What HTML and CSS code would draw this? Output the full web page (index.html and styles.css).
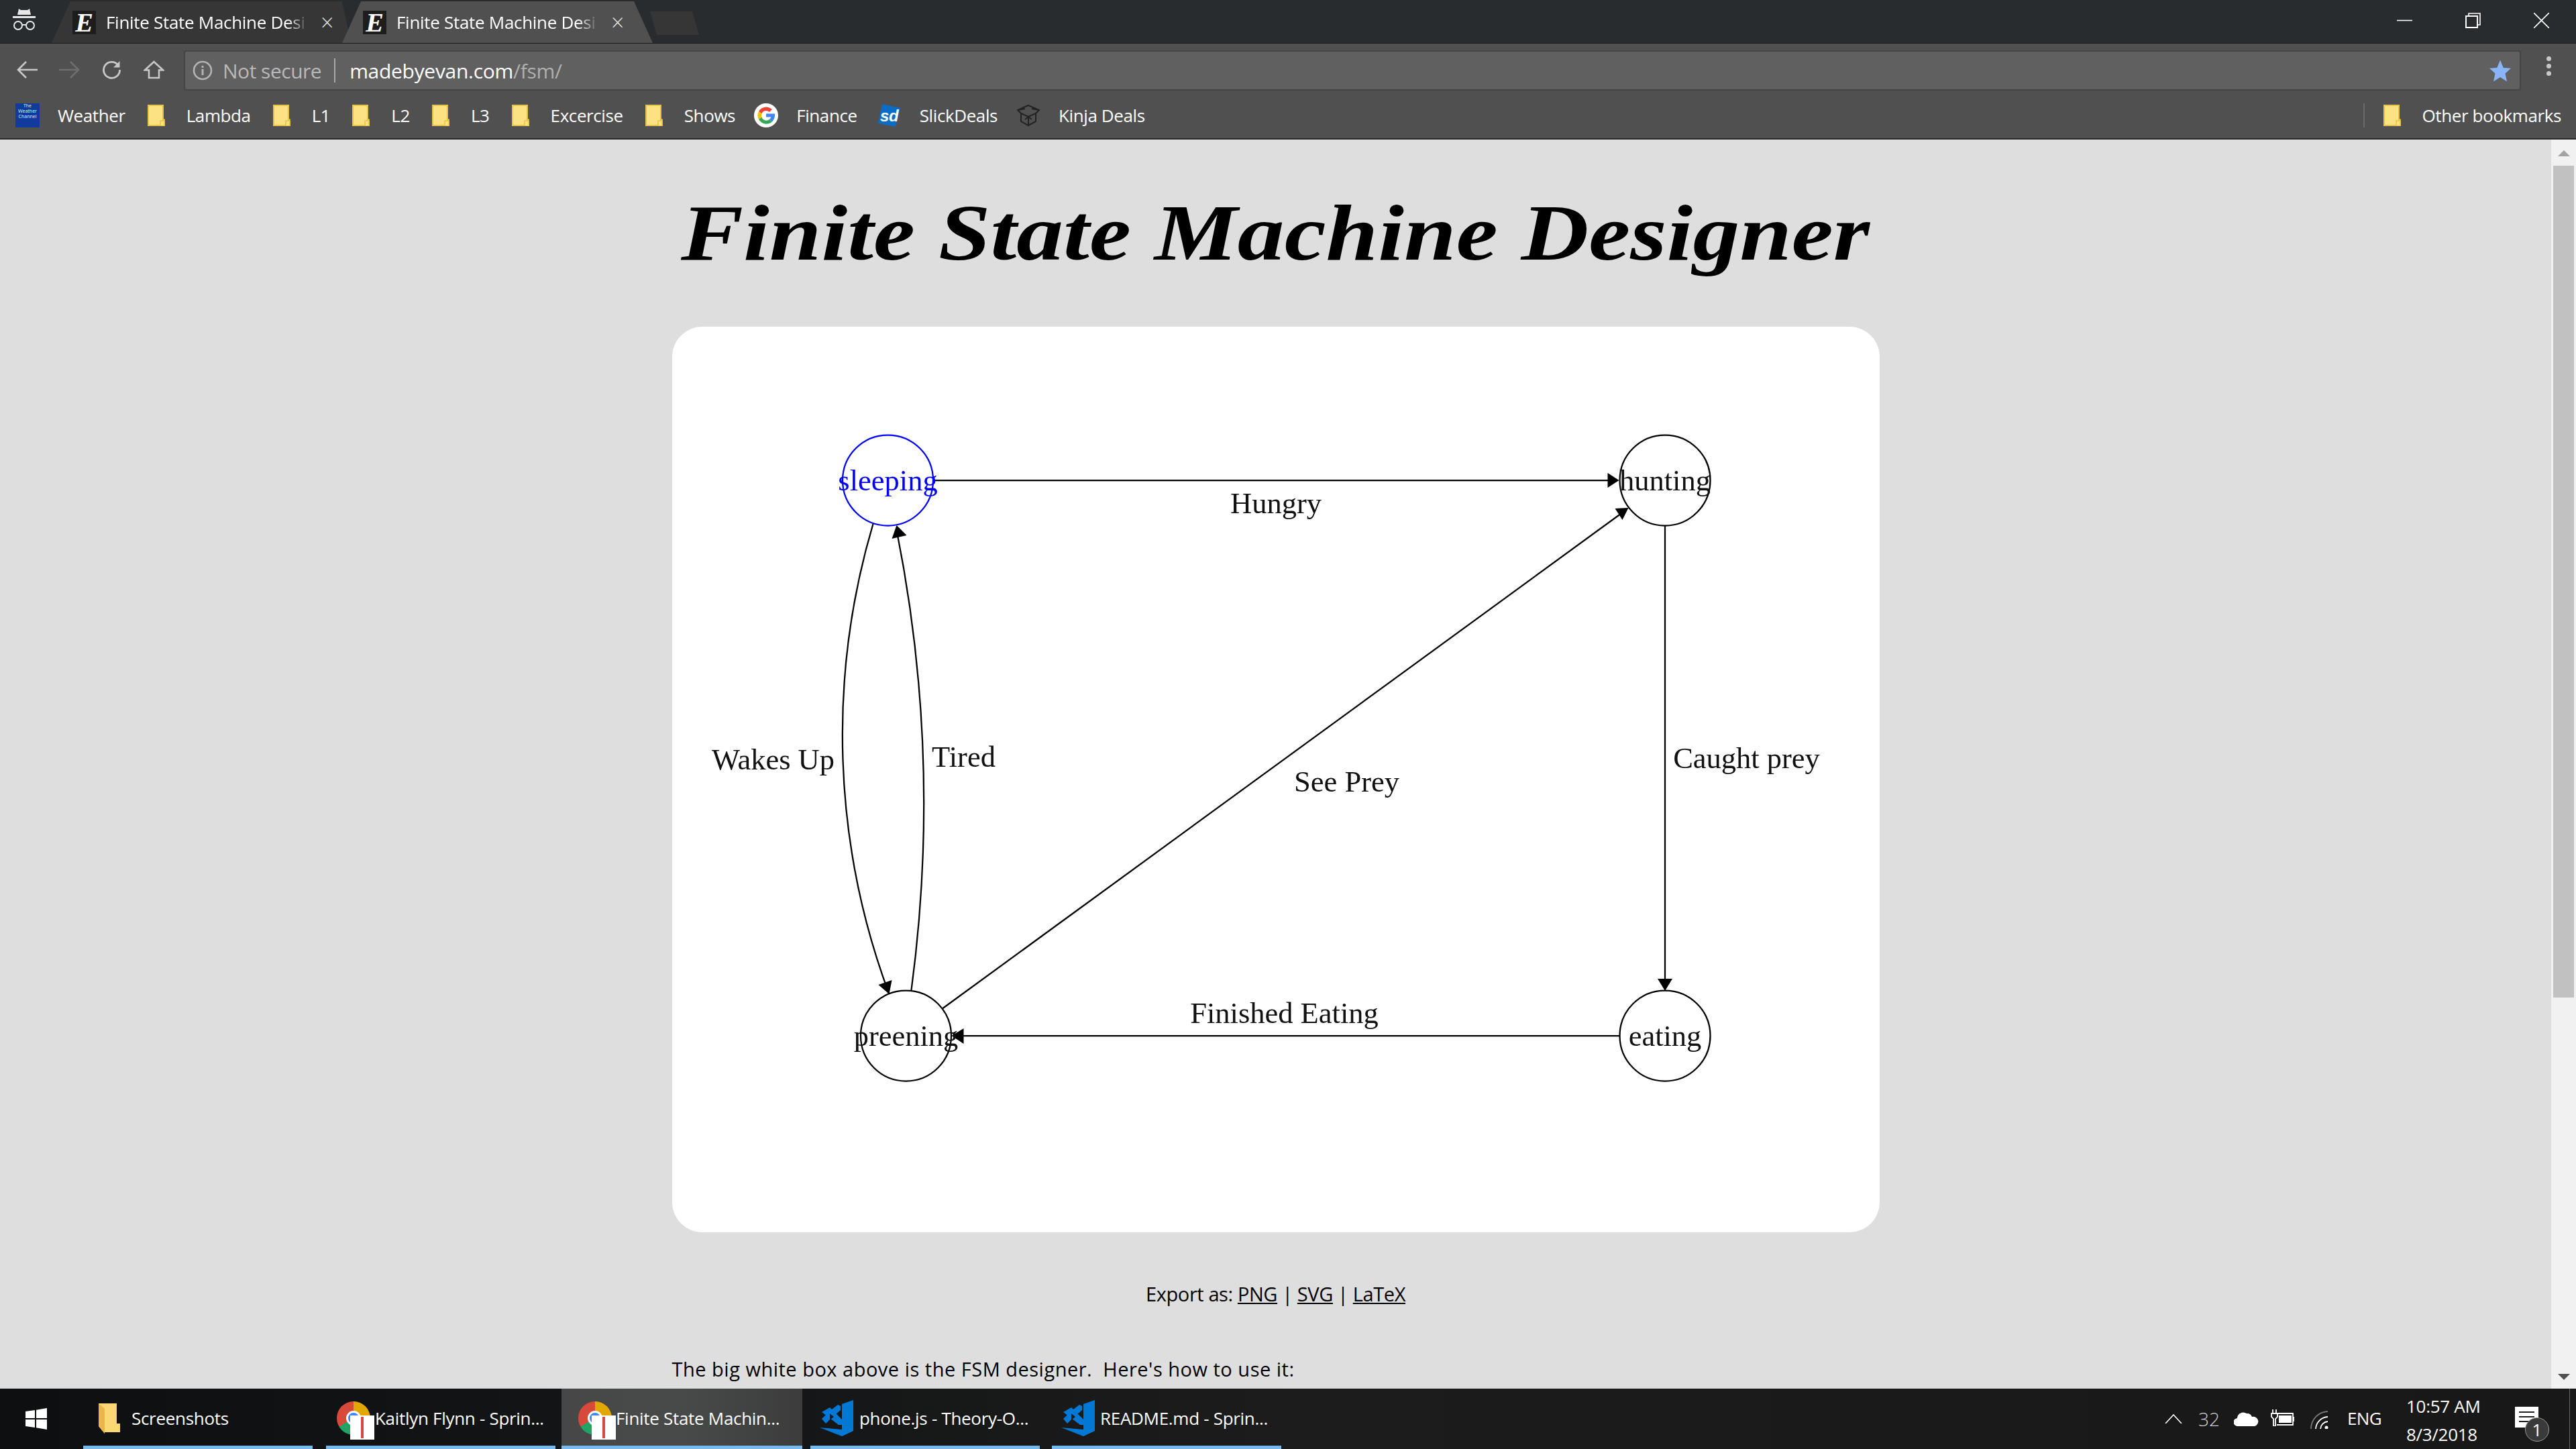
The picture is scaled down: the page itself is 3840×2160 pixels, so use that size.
FILE: index.html
```html
<!DOCTYPE html>
<html lang="en">
<head>
<meta charset="utf-8">
<title>Finite State Machine Designer</title>
<link rel="stylesheet" href="styles.css">
</head>
<body>
<header class="chrome">
  <div class="tabstrip">
    <svg class="incognito" viewBox="0 0 36 32"><path d="M10 0l3 2h10l3-2 2 9H8zM1 11h34v3H1z" fill="#e8e8e8"/><circle cx="9" cy="25" r="6" fill="none" stroke="#e8e8e8" stroke-width="2"/><circle cx="27" cy="25" r="6" fill="none" stroke="#e8e8e8" stroke-width="2"/><path d="M15 24h6" stroke="#e8e8e8" stroke-width="2"/></svg>
    <div class="tab tab-back">
      <span class="favicon">E</span><span class="tab-title">Finite State Machine Desi</span><span class="tab-close">×</span>
    </div>
    <div class="tab tab-active">
      <span class="favicon">E</span><span class="tab-title">Finite State Machine Desi</span><span class="tab-close">×</span>
    </div>
    <div class="newtab"></div>
    <div class="winctl">
      <svg class="winbtn" viewBox="0 0 23 23"><path d="M0 11.5h23" stroke="#fff" stroke-width="1.6"/></svg>
      <svg class="winbtn" viewBox="0 0 23 23"><path d="M5 5V1h17v17h-4" fill="none" stroke="#fff" stroke-width="1.6"/><rect x="1" y="5" width="17" height="17" fill="none" stroke="#fff" stroke-width="2"/></svg>
      <svg class="winbtn" viewBox="0 0 23 23"><path d="M0 0l23 23M23 0L0 23" stroke="#fff" stroke-width="1.6"/></svg>
    </div>
  </div>
  <div class="toolbar">
    <svg class="navicon" viewBox="0 0 31 28"><path d="M14 2L2 14l12 12M2 14h29" fill="none" stroke="#c8c8c8" stroke-width="2.6"/></svg>
    <svg class="navicon" viewBox="0 0 31 28"><path d="M17 2l12 12-12 12M29 14H0" fill="none" stroke="#6e6e6e" stroke-width="2.6"/></svg>
    <svg class="navicon" viewBox="0 0 31 28"><path d="M25 7a12 12 0 1 0 2.5 7" fill="none" stroke="#c8c8c8" stroke-width="2.8"/><path d="M27.500 1v9.500H18z" fill="#c8c8c8"/></svg>
    <svg class="navicon" viewBox="0 0 31 28"><path d="M15.500 2L2 14.500h6V26h15V14.500h6z" fill="none" stroke="#c8c8c8" stroke-width="2.6"/></svg>
    <div class="omnibox">
      <svg class="info" viewBox="0 0 30 30"><circle cx="15" cy="15" r="13" fill="none" stroke="#b4b4b4" stroke-width="2.6"/><path d="M15 13v9M15 8v3" stroke="#b4b4b4" stroke-width="3"/></svg>
      <span class="notsecure">Not secure</span>
      <span class="omni-div"></span>
      <span class="url">madebyevan.com<span class="url-path">/fsm/</span></span>
      <svg class="star" viewBox="0 0 32 32"><path d="M16 0l4.700 11.500L32 12.300l-8.500 7.700 2.500 12L16 25.500 6 32l2.500-12L0 12.300l11.300-.8z" fill="#8ab4f8"/></svg>
    </div>
    <div class="dots"><i></i><i></i><i></i></div>
  </div>
  <nav class="bookmarks">
    <div class="bm bm-first"><span class="weather">The<br>Weather<br>Channel</span><span>Weather</span></div>
    <div class="bm"><svg class="bmfolder"><use href="#folder"/></svg><span>Lambda</span></div>
    <div class="bm"><svg class="bmfolder"><use href="#folder"/></svg><span>L1</span></div>
    <div class="bm"><svg class="bmfolder"><use href="#folder"/></svg><span>L2</span></div>
    <div class="bm"><svg class="bmfolder"><use href="#folder"/></svg><span>L3</span></div>
    <div class="bm"><svg class="bmfolder"><use href="#folder"/></svg><span>Excercise</span></div>
    <div class="bm"><svg class="bmfolder"><use href="#folder"/></svg><span>Shows</span></div>
    <div class="bm bm-tight">
      <svg class="bmicon" viewBox="0 0 36 36"><circle cx="18" cy="18" r="18" fill="#fff"/><path d="M18 11a7 7 0 0 1 5 2l4-4A13 13 0 0 0 7 12l4.500 3.500A7 7 0 0 1 18 11z" fill="#ea4335"/><path d="M11.500 15.500L7 12a13 13 0 0 0 0 12l4.500-3.500a7 7 0 0 1 0-5z" fill="#fbbc05"/><path d="M11.500 20.500L7 24a13 13 0 0 0 20 3.500L22.800 24A7 7 0 0 1 11.500 20.500z" fill="#34a853"/><path d="M31 15.500H18v5h7.400a6.500 6.500 0 0 1-2.600 3.500l4.200 3.500C29.500 25 31.500 21 31 15.500z" fill="#4285f4"/></svg>
      <span>Finance</span>
    </div>
    <div class="bm bm-sd">
      <svg class="sd" viewBox="0 0 33 34"><path d="M6 0L33 6L26 34L0 29z" fill="#0a6cc4"/><text class="sd-text" x="3" y="26">sd</text></svg>
      <span>SlickDeals</span>
    </div>
    <div class="bm bm-tight">
      <svg class="bmicon" viewBox="0 0 36 36"><path d="M18 3L2 10l5 5v12l11 6 11-6V15l5-5-16-7zM7 15l11 5 11-5M18 20v13M18 20l-5 4M18 20l5 4M2 10l11-2M34 10L23 8" fill="none" stroke="#222" stroke-width="2"/></svg>
      <span>Kinja Deals</span>
    </div>
    <div class="bm-other">
      <svg class="bmfolder"><use href="#folder"/></svg><span>Other bookmarks</span>
    </div>
  </nav>
</header>

<svg class="defs" width="0" height="0">
  <symbol id="folder" viewBox="0 0 26 32"><path d="M1 1h22v24h2v6H1z" fill="#fde283" stroke="#e8c246" stroke-width="2"/><path d="M19 31v-7h4v-2h2v9" fill="#fde283" stroke="#e8c246" stroke-width="1.500"/></symbol>
</svg>

<div class="viewport">
  <main class="page">
    <h1 class="title"><span class="title-text">Finite State Machine Designer</span></h1>
    <div class="canvas">
      <svg class="fsm" viewBox="1001.500 487 1800 1350">
        <g class="edges">
          <path d="M1391 716H2400"/>
          <path d="M2481.500 784V1460"/>
          <path d="M2414 1544H1430"/>
          <path d="M1405 1503L2414 767"/>
          <path d="M1301 781A1107 1107 0 0 0 1325 1482"/>
          <path d="M1358 1476A2083 2083 0 0 0 1336 790"/>
        </g>
        <g class="heads">
          <path d="M2413 716L2396 705V727z"/>
          <path d="M2481.500 1477L2470.500 1459H2492.500z"/>
          <path d="M1418 1544L1436 1533V1556z"/>
          <path d="M2427 757L2407 758L2418 775z"/>
          <path d="M1325 1482L1309 1468L1329 1461z"/>
          <path d="M1336 783L1329 803L1351 798z"/>
        </g>
        <circle class="node node-on" cx="1323" cy="716" r="67.500"/>
        <circle class="node" cx="2481.500" cy="716" r="67.500"/>
        <circle class="node" cx="1350" cy="1544" r="67.500"/>
        <circle class="node" cx="2481.500" cy="1544" r="67.500"/>
        <text class="lbl lbl-on" x="1323" y="731">sleeping</text>
        <text class="lbl" x="2481.500" y="731">hunting</text>
        <text class="lbl" x="1350" y="1559">preening</text>
        <text class="lbl" x="2481.500" y="1559">eating</text>
        <text class="lbl" x="1901.500" y="765">Hungry</text>
        <text class="lbl" x="1152" y="1147">Wakes Up</text>
        <text class="lbl" x="1436" y="1143">Tired</text>
        <text class="lbl" x="2007" y="1180">See Prey</text>
        <text class="lbl" x="2603" y="1145">Caught prey</text>
        <text class="lbl" x="1914" y="1525">Finished Eating</text>
      </svg>
    </div>
    <p class="export">Export as: <a href="#png">PNG</a> | <a href="#svg">SVG</a> | <a href="#latex">LaTeX</a></p>
    <p class="help">The big white box above is the FSM designer.&nbsp; Here's how to use it:</p>
  </main>
  <aside class="scrollbar">
    <span class="arrow-up"></span>
    <span class="thumb"></span>
    <span class="arrow-down"></span>
  </aside>
</div>

<footer class="taskbar">
  <svg class="winlogo" viewBox="0 0 32 32"><path d="M0 5l14-2v12H0zM16 2.700L32 0v15H16zM0 17h14v12L0 27zM16 17h16v15l-16-2.700z" fill="#fff"/></svg>
  <div class="task task-1">
    <svg class="task-folder" viewBox="0 0 32 45"><path d="M0 0h27v30h5v13H9v2l-9-11z" fill="#fcd874"/><path d="M0 0l9 8v37L0 34z" fill="#eab54a"/></svg>
    <span>Screenshots</span>
  </div>
  <div class="task task-2">
    <span class="chromeicon"></span><span class="paper"><i></i></span>
    <span>Kaitlyn Flynn - Sprin...</span>
  </div>
  <div class="task task-3">
    <span class="chromeicon"></span><span class="paper"><i></i></span>
    <span>Finite State Machin...</span>
  </div>
  <div class="task task-4">
    <svg class="vscode" viewBox="0 0 53 54"><path d="M33 6l17-6v46l-17 8L0 41l33 3V6z" fill="#0078d4"/><path d="M3 18l12-7 18 18v8l-5 0zM3 28l11-11 13-10 4 2v6L15 29l-6 6z" fill="#0078d4"/><path d="M15 20l6 5-6 5z" fill="#1b1b1b"/></svg>
    <span>phone.js - Theory-O...</span>
  </div>
  <div class="task task-5">
    <svg class="vscode" viewBox="0 0 53 54"><path d="M33 6l17-6v46l-17 8L0 41l33 3V6z" fill="#0078d4"/><path d="M3 18l12-7 18 18v8l-5 0zM3 28l11-11 13-10 4 2v6L15 29l-6 6z" fill="#0078d4"/><path d="M15 20l6 5-6 5z" fill="#1b1b1b"/></svg>
    <span>README.md - Sprin...</span>
  </div>
  <div class="tray">
    <svg class="tray-caret" viewBox="0 0 26 14"><path d="M1 14L13 1l12 13" fill="none" stroke="#fff" stroke-width="1.600"/></svg>
    <span class="tray-temp">32</span>
    <svg class="tray-cloud" viewBox="0 0 37 23"><path d="M6 23a6 6 0 0 1-1-12 9 9 0 0 1 14-7 8 8 0 0 1 8 5 7 7 0 0 1 4 14z" fill="#fff"/></svg>
    <svg class="tray-power" viewBox="0 0 35 25"><path d="M3 0v6M8 0v6M1 6h9v5l-3 3v11H4V14l-3-3z" fill="none" stroke="#fff" stroke-width="1.800"/><path d="M10 6h23v17H9" fill="none" stroke="#fff" stroke-width="1.800"/><path d="M12 9h19v11H12zM33 11h2v7h-2z" fill="#fff"/></svg>
    <svg class="tray-wifi" viewBox="0 0 27 27"><path d="M1 27A26 26 0 0 1 26 1" fill="none" stroke="#777" stroke-width="1.800"/><path d="M8 27A19 19 0 0 1 26 9" fill="none" stroke="#fff" stroke-width="1.800"/><path d="M15 27A12 12 0 0 1 26 16" fill="none" stroke="#fff" stroke-width="1.800"/><circle cx="24" cy="25" r="2.500" fill="#fff"/></svg>
    <span class="tray-lang">ENG</span>
    <div class="clock"><span>10:57 AM</span><span>8/3/2018</span></div>
    <div class="notif">
      <svg class="notif-box" viewBox="0 0 35 31"><path d="M0 0h35v31H0z" fill="#fff"/><path d="M6 8h23M6 15h23M6 22h23" stroke="#222" stroke-width="2"/></svg>
      <span class="badge">1</span>
    </div>
    <span class="showdesk"></span>
  </div>
</footer>
</body>
</html>
```
FILE: styles.css
```css
html, body { margin: 0; padding: 0; }
body {
  width: 3840px;
  height: 2160px;
  overflow: hidden;
  display: flex;
  flex-direction: column;
  font-family: "Open Sans", "Noto Sans", sans-serif;
  background: #dedede;
}

/* browser frame */
.chrome { flex: none; height: 208px; display: flex; flex-direction: column; color: #fff; }
.tabstrip {
  height: 64px;
  background: #292c2f;
  display: flex;
  align-items: flex-start;
  position: relative;
  border-bottom: 1px solid #1c1d1f;
}
.incognito { width: 36px; height: 32px; margin: 13px 0 0 18px; flex: none; }
.tab {
  position: relative;
  height: 62px;
  margin-top: 2px;
  width: 463px;
  display: flex;
  align-items: center;
  clip-path: polygon(28px 0, 435px 0, 463px 100%, 0 100%);
  flex: none;
}
.tab-back { background: #363636; margin-left: 23px; width: 446px; clip-path: polygon(28px 0, 433px 0, 446px 100%, 0 100%); }
.tab-active { background: #505050; margin-left: -13px; }
.favicon {
  margin-left: 31px;
  width: 35px;
  height: 35px;
  background: #1d1d1d;
  color: #fff;
  font: italic 700 40px/35px "Liberation Serif", serif;
  text-align: center;
  flex: none;
}
.tab-title {
  margin-left: 15px;
  width: 301px;
  overflow: hidden;
  white-space: nowrap;
  font-size: 26px;
  letter-spacing: -0.3px;
  flex: none;
  -webkit-mask-image: linear-gradient(90deg, #000 90%, transparent);
  mask-image: linear-gradient(90deg, #000 90%, transparent);
}
.tab-close { margin-left: 19px; font-size: 34px; line-height: 1; color: #ddd; font-weight: 300; }
.newtab {
  width: 73px;
  height: 35px;
  margin: 17px 0 0 -4px;
  background: #363636;
  clip-path: polygon(0 0, 63px 0, 73px 100%, 10px 100%);
  flex: none;
}
.winctl { margin-left: auto; margin-right: 40px; margin-top: 19px; display: flex; gap: 79px; }
.winbtn { width: 23px; height: 23px; }

.toolbar {
  height: 71px;
  background: #505050;
  display: flex;
  align-items: flex-start;
  padding-left: 25px;
  box-sizing: border-box;
  padding-top: 10px;
}
.navicon { width: 31px; height: 28px; margin: 15px 32px 0 0; flex: none; }
.omnibox {
  width: 3484px;
  height: 60px;
  margin-left: -3px;
  box-sizing: border-box;
  background: #606060;
  border: 2px solid #454545;
  border-radius: 4px;
  display: flex;
  align-items: center;
  position: relative;
  flex: none;
}
.info { width: 30px; height: 30px; margin-left: 11px; flex: none; }
.notsecure { margin-left: 15px; font-size: 30px; letter-spacing: -0.5px; color: #b9b9b9; }
.omni-div { width: 2px; height: 36px; background: #a8a8a8; margin-left: 19px; }
.url { margin-left: 21px; font-size: 30px; letter-spacing: -0.3px; color: #fff; }
.url-path { color: #b0b0b0; }
.star { width: 32px; height: 33px; margin-left: auto; margin-right: 13px; }
.dots { display: flex; flex-direction: column; gap: 4px; margin: 9px 0 0 38px; }
.dots i { width: 7px; height: 7px; border-radius: 50%; background: #c8c8c8; }

.bookmarks {
  height: 73px;
  background: #505050;
  border-bottom: 2px solid #2a2a2a;
  box-sizing: border-box;
  display: flex;
  align-items: center;
  padding-left: 23px;
  padding-top: 3px;
  font-size: 26px;
  letter-spacing: -0.4px;
  gap: 33px;
}
.bm { display: flex; align-items: center; gap: 32px; }
.bm-first { gap: 27px; }
.bm-tight { margin-left: -5px; gap: 27px; }
.bm-sd { margin-left: -2px; gap: 29px; }
.bmfolder { width: 26px; height: 32px; flex: none; }
.bmicon { width: 36px; height: 36px; flex: none; }
.weather {
  width: 36px;
  height: 36px;
  background: #123a9c;
  color: #cfe;
  font-size: 7px;
  line-height: 8px;
  letter-spacing: 0;
  overflow: hidden;
  text-align: center;
  flex: none;
}
.sd { width: 33px; height: 34px; flex: none; }
.sd-text { font: italic 700 24px "Liberation Sans", sans-serif; fill: #fff; }
.bm-other {
  margin-left: auto;
  margin-right: 22px;
  display: flex;
  align-items: center;
  gap: 32px;
  letter-spacing: -0.4px;
  border-left: 2px solid #6a6a6a;
  padding-left: 28px;
  height: 36px;
}

/* page */
.viewport { flex: none; height: 1862px; display: flex; overflow: hidden; }
.page { width: 3803px; flex: none; }
.title {
  margin: 72px auto 0;
  height: 207px;
  text-align: center;
  font: italic 700 118px/136px "Liberation Serif", serif;
  color: #000;
}
.title-text { display: inline-block; transform: scaleX(1.183); white-space: nowrap; }
.canvas { width: 1800px; height: 1350px; margin: 0 auto; background: #fff; border-radius: 45px; overflow: hidden; }
.fsm { display: block; width: 1800px; height: 1350px; filter: blur(0.75px); }
.edges path { fill: none; stroke: #000; stroke-width: 2.25px; }
.heads path { fill: #000; }
.node { fill: none; stroke: #000; stroke-width: 2.25px; }
.node-on { stroke: #0000ff; }
.lbl { font-family: "Liberation Serif", serif; font-size: 44.500px; text-anchor: middle; fill: #111; }
.lbl-on { fill: #0000ff; }
.export {
  margin: 70px 0 0;
  text-align: center;
  font-size: 29px;
  line-height: 44px;
  letter-spacing: -0.4px;
  color: #000;
}
.export a { color: #000; text-decoration: underline; }
.help {
  width: 1800px;
  margin: 68px auto 0;
  font-size: 29px;
  line-height: 44px;
  letter-spacing: 0.5px;
  white-space: nowrap;
  color: #000;
}
.defs { position: absolute; }

.scrollbar { width: 37px; flex: none; background: #f1f1f1; display: flex; flex-direction: column; align-items: center; }
.arrow-up { width: 0; height: 0; border: 9px solid transparent; border-top: 0; border-bottom: 9px solid #a3a3a3; margin-top: 16px; }
.thumb { width: 31px; height: 1240px; background: #c1c1c1; margin-top: 14px; }
.arrow-down { width: 0; height: 0; border: 9px solid transparent; border-bottom: 0; border-top: 9px solid #505050; margin-top: auto; margin-bottom: 13px; }

/* taskbar */
.taskbar {
  flex: none;
  height: 90px;
  background: linear-gradient(90deg, #0d0f10, #151617 30%, #1c1c1c 50%, #181818);
  color: #fff;
  display: flex;
  position: relative;
  font-size: 26px;
  letter-spacing: -0.3px;
}
.winlogo { width: 32px; height: 32px; margin: 29px 54px 0 38px; flex: none; }
.task {
  box-sizing: border-box;
  height: 90px;
  width: 342px;
  margin-right: 20px;
  padding-top: 3px;
  border-bottom: 5px solid #76b9ed;
  display: flex;
  align-items: center;
  position: relative;
  flex: none;
}
.task-1 { padding-left: 23px; gap: 17px; }
.task-folder { width: 32px; height: 45px; flex: none; }
.task-2 { padding-left: 73px; margin-right: 9px; }
.task-3 { width: 359px; padding-left: 81px; margin-right: 12px; background: linear-gradient(90deg, #474747, #484a4a 50%, #3c3c3c); }
.task-4 { padding-left: 14px; gap: 6px; margin-right: 18px; }
.task-5 { padding-left: 14px; gap: 5px; }
.chromeicon {
  position: absolute;
  left: 16px;
  top: 19px;
  width: 50px;
  height: 50px;
  border-radius: 50%;
  background: conic-gradient(#e0a800 0 90deg, #1fa463 90deg 240deg, #d8493c 240deg 360deg);
}
.task-3 .chromeicon { left: 25px; }
.chromeicon::after {
  content: "";
  position: absolute;
  left: 14px;
  top: 14px;
  width: 22px;
  height: 22px;
  border-radius: 50%;
  background: #4285f4;
  border: 3px solid #fff;
  box-sizing: border-box;
}
.paper {
  position: absolute;
  left: 36px;
  top: 40px;
  width: 36px;
  height: 36px;
  background: #fff;
  display: flex;
  justify-content: center;
}
.task-3 .paper { left: 45px; }
.paper i { width: 4px; height: 32px; background: #d9454a; margin-top: 2px; }
.vscode { width: 53px; height: 54px; flex: none; }

.tray { position: absolute; inset: 0; pointer-events: none; }
.tray > * { position: absolute; }
.tray-caret { left: 3227px; top: 38px; width: 26px; height: 14px; }
.tray-temp { left: 3277px; top: 30px; font-size: 28px; line-height: 30px; font-weight: 300; color: #ccc; letter-spacing: 0; }
.tray-cloud { left: 3330px; top: 33px; width: 37px; height: 23px; }
.tray-power { left: 3385px; top: 31px; width: 35px; height: 25px; }
.tray-wifi { left: 3444px; top: 33px; width: 27px; height: 27px; }
.tray-lang { left: 3499px; top: 29px; font-size: 26px; line-height: 30px; letter-spacing: -0.6px; }
.clock { left: 3587px; top: 11px; width: 112px; display: flex; flex-direction: column; gap: 11px; font-size: 26px; line-height: 31px; letter-spacing: -0.3px; white-space: nowrap; }
.notif { left: 3749px; top: 27px; width: 52px; height: 52px; }
.notif-box { position: absolute; left: 0; top: 0; width: 35px; height: 31px; }
.badge {
  position: absolute;
  left: 15px;
  top: 16px;
  width: 34px;
  height: 34px;
  border-radius: 50%;
  background: #3a3a3a;
  border: 1px solid #999;
  font-size: 26px;
  line-height: 34px;
  text-align: center;
  letter-spacing: 0;
}
.showdesk { left: 3830px; top: 0; width: 1px; height: 90px; background: #666; }
```
